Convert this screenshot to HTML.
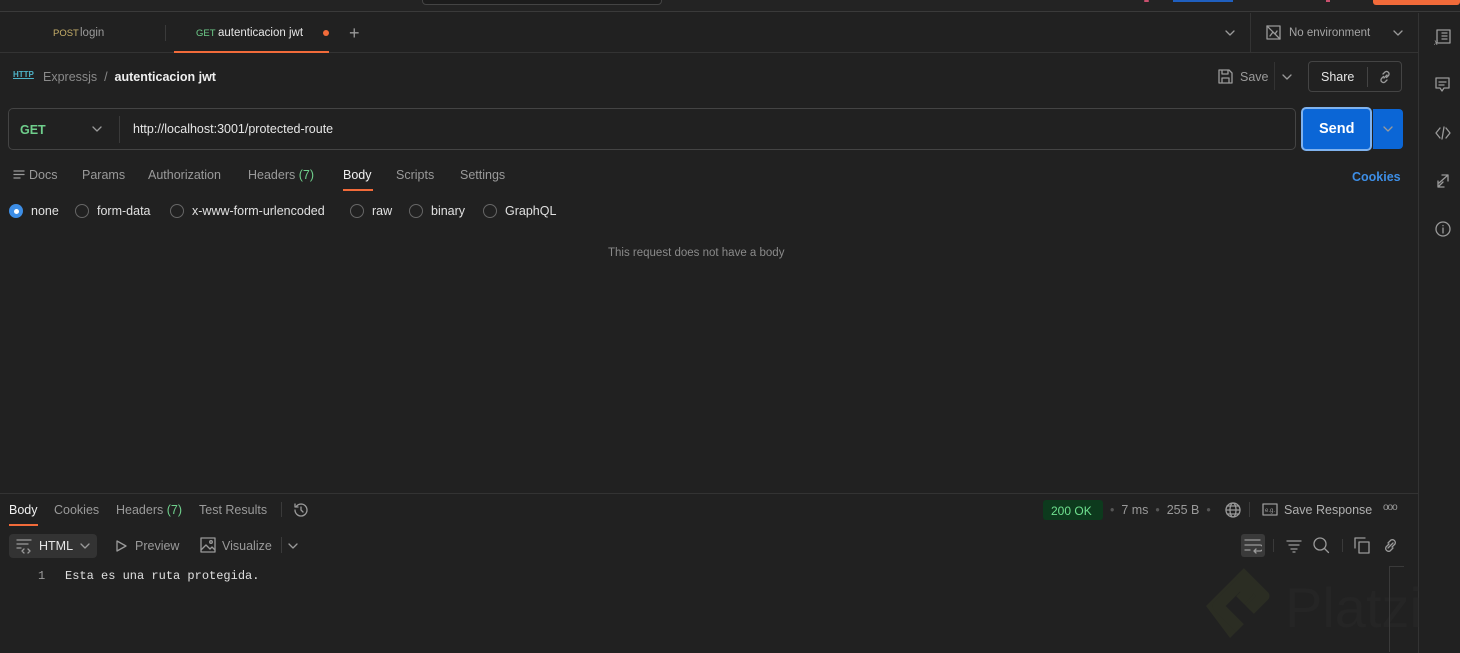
<!DOCTYPE html>
<html><head><meta charset="utf-8"><style>
*{box-sizing:border-box;margin:0;padding:0}
body{width:1460px;height:652px;background:#212121;font-family:"Liberation Sans",sans-serif;color:#bdbdbd;position:relative;overflow:hidden;font-size:12.5px}
.a{position:absolute;white-space:nowrap}
.ic{stroke:#9a9a9a;fill:none;stroke-width:1.3;stroke-linecap:round;stroke-linejoin:round}
</style></head><body>
<div class="a" style="left:0;top:0;width:1460px;height:12px;background:#232323;border-bottom:1px solid #3a3a3a"></div>
<div class="a" style="left:422px;top:-6px;width:240px;height:11px;border:1px solid #444;border-radius:4px;background:#1c1c1c"></div>
<div class="a" style="left:1173px;top:0;width:60px;height:2px;background:#1f5fbf"></div>
<div class="a" style="left:1144px;top:0;width:5px;height:2px;background:#c9506e;border-radius:2px"></div>
<div class="a" style="left:1326px;top:0;width:4px;height:2px;background:#c9506e"></div>
<div class="a" style="left:1373px;top:0;width:87px;height:5px;background:#f26b3a;border-radius:0 0 3px 3px"></div>
<div class="a" style="left:0;top:52px;width:1418px;height:1px;background:#333"></div>
<div class="a" style="left:53px;top:28px;font-size:9.5px;color:#c8b06a">POST</div>
<div class="a" style="left:80px;top:27px;font-size:11.5px;color:#9a9a9a">login</div>
<div class="a" style="left:165px;top:25px;width:1px;height:16px;background:#3a3a3a"></div>
<div class="a" style="left:196px;top:28px;font-size:9.5px;color:#6fcf8c">GET</div>
<div class="a" style="left:218px;top:27px;font-size:11.5px;color:#e6e6e6">autenticacion jwt</div>
<div class="a" style="left:323px;top:30px;width:6px;height:6px;border-radius:50%;background:#f26b3a"></div>
<div class="a" style="left:349px;top:23px;font-size:18px;color:#9a9a9a">+</div>
<div class="a" style="left:174px;top:51px;width:155px;height:2px;background:#f26b3a"></div>
<svg class="a" style="left:1224px;top:28px" width="12" height="10"><path class="ic" d="M2 3l4 4 4-4"/></svg>
<div class="a" style="left:1250px;top:13px;width:1px;height:39px;background:#333"></div>
<svg class="a" style="left:1266px;top:25px" width="15" height="15"><rect class="ic" x="1" y="1" width="13" height="13"/><path class="ic" d="M1 1l13 13M4 11l3-4 2 2 2-3"/></svg>
<div class="a" style="left:1289px;top:27px;font-size:11.5px;color:#a5a5a5">No environment</div>
<svg class="a" style="left:1392px;top:28px" width="12" height="10"><path class="ic" d="M2 3l4 4 4-4"/></svg>
<div class="a" style="left:1418px;top:13px;width:1px;height:640px;background:#333"></div>
<svg class="a" style="left:1434px;top:28px" width="18" height="18"><rect class="ic" x="3" y="2" width="13" height="13"/><path class="ic" d="M8 5h5M8 8h5M8 11h5"/><text x="0" y="17" font-size="9" fill="#9a9a9a" font-style="italic" font-family="Liberation Serif">x</text></svg>
<svg class="a" style="left:1434px;top:76px" width="18" height="18"><path class="ic" d="M2 2h13v10H10l-2 3-2-3H2z M5 6h7M5 9h5"/></svg>
<svg class="a" style="left:1434px;top:124px" width="18" height="18"><path class="ic" d="M6 4L2 9l4 5M12 4l4 5-4 5M10 3l-2 12"/></svg>
<svg class="a" style="left:1434px;top:172px" width="18" height="18"><path class="ic" d="M8 3h6v6M14 3L5 11M10 15H4V9M4 15l5-5"/></svg>
<svg class="a" style="left:1434px;top:220px" width="18" height="18"><circle class="ic" cx="9" cy="9" r="7"/><path class="ic" d="M9 8v5M9 5.5v.2"/></svg>
<div class="a" style="left:13px;top:70px;font-size:8px;font-weight:bold;color:#4eb3c8;text-decoration:underline">HTTP</div>
<div class="a" style="left:43px;top:70px;font-size:12.5px;color:#8a8a8a">Expressjs&nbsp;&nbsp;/&nbsp;&nbsp;<span style="color:#f0f0f0;font-weight:bold">autenticacion jwt</span></div>
<svg class="a" style="left:1218px;top:69px" width="15" height="15"><path class="ic" d="M1 1h10l3 3v10H1z M4 1v4h6V1 M4 14V9h7v5"/></svg>
<div class="a" style="left:1240px;top:70px;font-size:12.5px;color:#9a9a9a">Save</div>
<div class="a" style="left:1274px;top:62px;width:1px;height:28px;background:#333"></div>
<svg class="a" style="left:1281px;top:72px" width="12" height="10"><path class="ic" d="M2 3l4 4 4-4" stroke="#ccc"/></svg>
<div class="a" style="left:1308px;top:61px;width:94px;height:31px;border:1px solid #444;border-radius:4px"></div>
<div class="a" style="left:1321px;top:70px;font-size:12.5px;color:#e6e6e6">Share</div>
<div class="a" style="left:1367px;top:67px;width:1px;height:20px;background:#444"></div>
<svg class="a" style="left:1377px;top:69px" width="16" height="16"><path class="ic" stroke="#ccc" d="M7 9l3-3M6 5l2-2a2.5 2.5 0 013.5 3.5l-2 2M10 11l-2 2a2.5 2.5 0 01-3.5-3.5l2-2"/></svg>
<div class="a" style="left:8px;top:108px;width:1288px;height:42px;border:1px solid #444;border-radius:5px;background:#212121"></div>
<div class="a" style="left:20px;top:123px;font-size:12.5px;font-weight:bold;color:#6fcf8c">GET</div>
<svg class="a" style="left:91px;top:124px" width="12" height="10"><path class="ic" d="M2 3l4 4 4-4"/></svg>
<div class="a" style="left:119px;top:116px;width:1px;height:27px;background:#3a3a3a"></div>
<div class="a" style="left:133px;top:122px;font-size:12.5px;color:#e6e6e6">http://localhost:3001/protected-route</div>
<div class="a" style="left:1301px;top:107px;width:71px;height:44px;border:2px solid #7fb2ee;border-radius:5px;background:#0b66d6"></div>
<div class="a" style="left:1319px;top:121px;font-size:14.5px;font-weight:bold;color:#fff">Send</div>
<div class="a" style="left:1373px;top:109px;width:30px;height:40px;background:#0b66d6;border-radius:0 4px 4px 0"></div>
<svg class="a" style="left:1382px;top:124px" width="12" height="10"><path class="ic" stroke="#fff" d="M2 3l4 4 4-4"/></svg>
<svg class="a" style="left:13px;top:170px" width="12" height="10"><path class="ic" d="M1 1h10M1 4.5h10M1 8h6"/></svg>
<div class="a" style="left:29px;top:168px;color:#9a9a9a">Docs</div>
<div class="a" style="left:82px;top:168px;color:#9a9a9a">Params</div>
<div class="a" style="left:148px;top:168px;color:#9a9a9a">Authorization</div>
<div class="a" style="left:248px;top:168px;color:#9a9a9a">Headers <span style="color:#6fcf8c">(7)</span></div>
<div class="a" style="left:343px;top:168px;color:#f0f0f0">Body</div>
<div class="a" style="left:343px;top:189px;width:30px;height:2px;background:#f26b3a"></div>
<div class="a" style="left:396px;top:168px;color:#9a9a9a">Scripts</div>
<div class="a" style="left:460px;top:168px;color:#9a9a9a">Settings</div>
<div class="a" style="left:1352px;top:170px;font-size:12.5px;font-weight:bold;color:#3d8ee6">Cookies</div>
<div class="a" style="left:9px;top:204px;width:14px;height:14px;border-radius:50%;background:#3d8ee6"></div>
<div class="a" style="left:13.5px;top:208.5px;width:5px;height:5px;border-radius:50%;background:#fff"></div>
<div class="a" style="left:31px;top:204px;color:#e0e0e0">none</div>
<div class="a" style="left:75px;top:204px;width:14px;height:14px;border-radius:50%;border:1px solid #666"></div>
<div class="a" style="left:97px;top:204px;color:#e0e0e0">form-data</div>
<div class="a" style="left:170px;top:204px;width:14px;height:14px;border-radius:50%;border:1px solid #666"></div>
<div class="a" style="left:192px;top:204px;color:#e0e0e0">x-www-form-urlencoded</div>
<div class="a" style="left:350px;top:204px;width:14px;height:14px;border-radius:50%;border:1px solid #666"></div>
<div class="a" style="left:372px;top:204px;color:#e0e0e0">raw</div>
<div class="a" style="left:409px;top:204px;width:14px;height:14px;border-radius:50%;border:1px solid #666"></div>
<div class="a" style="left:431px;top:204px;color:#e0e0e0">binary</div>
<div class="a" style="left:483px;top:204px;width:14px;height:14px;border-radius:50%;border:1px solid #666"></div>
<div class="a" style="left:505px;top:204px;color:#e0e0e0">GraphQL</div>
<div class="a" style="left:608px;top:247px;font-size:11.5px;color:#8a8a8a">This request does not have a body</div>
<div class="a" style="left:0;top:493px;width:1418px;height:1px;background:#333"></div>
<div class="a" style="left:9px;top:503px;color:#f0f0f0">Body</div>
<div class="a" style="left:9px;top:524px;width:29px;height:2px;background:#f26b3a"></div>
<div class="a" style="left:54px;top:503px;color:#9a9a9a">Cookies</div>
<div class="a" style="left:116px;top:503px;color:#9a9a9a">Headers <span style="color:#6fcf8c">(7)</span></div>
<div class="a" style="left:199px;top:503px;color:#9a9a9a">Test Results</div>
<div class="a" style="left:281px;top:502px;width:1px;height:15px;background:#3a3a3a"></div>
<svg class="a" style="left:292px;top:501px" width="18" height="18"><path class="ic" d="M3 9a6 6 0 106-6 6 6 0 00-5 3M3 3v3h3M9 6v3l2 2"/></svg>
<div class="a" style="left:1043px;top:500px;width:60px;height:20px;background:#0d3a1d;border-radius:3px"></div>
<div class="a" style="left:1051px;top:504px;font-size:12px;color:#6fe08f">200 OK</div>
<div class="a" style="left:1110px;top:503px;color:#9a9a9a"><span style="color:#555">•</span>&nbsp; 7 ms &nbsp;<span style="color:#555">•</span>&nbsp; 255 B &nbsp;<span style="color:#555">•</span></div>
<svg class="a" style="left:1224px;top:501px" width="18" height="18"><circle class="ic" cx="9" cy="9" r="7"/><ellipse class="ic" cx="9" cy="9" rx="3" ry="7"/><path class="ic" d="M2 9h14M3 5h12M3 13h12"/></svg>
<div class="a" style="left:1249px;top:502px;width:1px;height:15px;background:#3a3a3a"></div>
<svg class="a" style="left:1262px;top:503px" width="16" height="13"><rect class="ic" x="1" y="1" width="14" height="11"/><text x="3" y="9" font-size="6" fill="#9a9a9a">e.g.</text></svg>
<div class="a" style="left:1284px;top:503px;color:#b0b0b0">Save Response</div>
<div class="a" style="left:1383px;top:502px;font-size:10px;color:#9a9a9a;letter-spacing:-1px">ooo</div>
<div class="a" style="left:9px;top:534px;width:88px;height:24px;background:#333;border-radius:4px"></div>
<svg class="a" style="left:16px;top:538px" width="17" height="16"><path class="ic" d="M1 2h14M1 6h11M1 10h4M8 11l-2 2 2 2M12 11l2 2-2 2"/></svg>
<div class="a" style="left:39px;top:539px;color:#e6e6e6">HTML</div>
<svg class="a" style="left:79px;top:541px" width="12" height="10"><path class="ic" stroke="#ccc" d="M2 3l4 4 4-4"/></svg>
<svg class="a" style="left:114px;top:539px" width="14" height="14"><path class="ic" d="M3 2l9 5-9 5z"/></svg>
<div class="a" style="left:135px;top:539px;color:#9a9a9a">Preview</div>
<svg class="a" style="left:200px;top:537px" width="16" height="16"><rect class="ic" x="1" y="1" width="14" height="14"/><path class="ic" d="M1 13l5-5 4 4 2-2 3 3"/><circle class="ic" cx="11" cy="5" r="1.3"/></svg>
<div class="a" style="left:222px;top:539px;color:#9a9a9a">Visualize</div>
<div class="a" style="left:281px;top:537px;width:1px;height:16px;background:#3a3a3a"></div>
<svg class="a" style="left:287px;top:541px" width="12" height="10"><path class="ic" d="M2 3l4 4 4-4"/></svg>
<div class="a" style="left:1241px;top:534px;width:24px;height:23px;background:#3a3a3a;border-radius:3px"></div>
<svg class="a" style="left:1244px;top:538px" width="18" height="16"><path class="ic" stroke="#ddd" d="M1 2h15M1 7h15a3 3 0 010 6h-6M12 11l-2 2 2 2M1 12h5"/></svg>
<div class="a" style="left:1273px;top:539px;width:1px;height:13px;background:#3a3a3a"></div>
<svg class="a" style="left:1286px;top:539px" width="16" height="14"><path class="ic" d="M1 2h14M3 6h10M5 10h6M7 13h2"/></svg>
<svg class="a" style="left:1313px;top:537px" width="17" height="17"><circle class="ic" cx="7" cy="7" r="6"/><path class="ic" d="M11.5 11.5l4 4"/></svg>
<div class="a" style="left:1342px;top:539px;width:1px;height:13px;background:#3a3a3a"></div>
<svg class="a" style="left:1354px;top:537px" width="17" height="17"><path class="ic" d="M1 11V1h10"/><rect class="ic" x="5" y="5" width="10" height="11"/></svg>
<svg class="a" style="left:1382px;top:537px" width="17" height="17"><path class="ic" d="M6 11l5-5M6 6l3-3a3 3 0 014 4l-3 3M11 11l-3 3a3 3 0 01-4-4l3-3"/></svg>
<div class="a" style="left:38px;top:569px;font-family:'Liberation Mono',monospace;font-size:12px;color:#9a9a9a">1</div>
<div class="a" style="left:65px;top:569px;font-family:'Liberation Mono',monospace;font-size:12px;color:#e0e0e0">Esta es una ruta protegida.</div>
<svg class="a" style="left:1200px;top:560px" width="80" height="92"><path d="M40 12L64 36 50 50 40 40 48 32 40 24 18 46 40 68 30 78 6 46z" fill="#2b2d23"/><path d="M40 12L64 36 50 50M40 40l8-8-8-8-22 22 22 22" fill="none" stroke="#2b2d23" stroke-width="11" stroke-linejoin="round"/><path d="M40 24l8 8-8 8-10 0z" fill="none"/></svg>
<div class="a" style="left:1285px;top:575px;font-size:56px;color:#252525">Platzi</div>
<div class="a" style="left:1389px;top:566px;width:15px;height:86px;border-left:1px solid #3a3a3a;border-top:1px solid #3a3a3a"></div>
</body></html>
